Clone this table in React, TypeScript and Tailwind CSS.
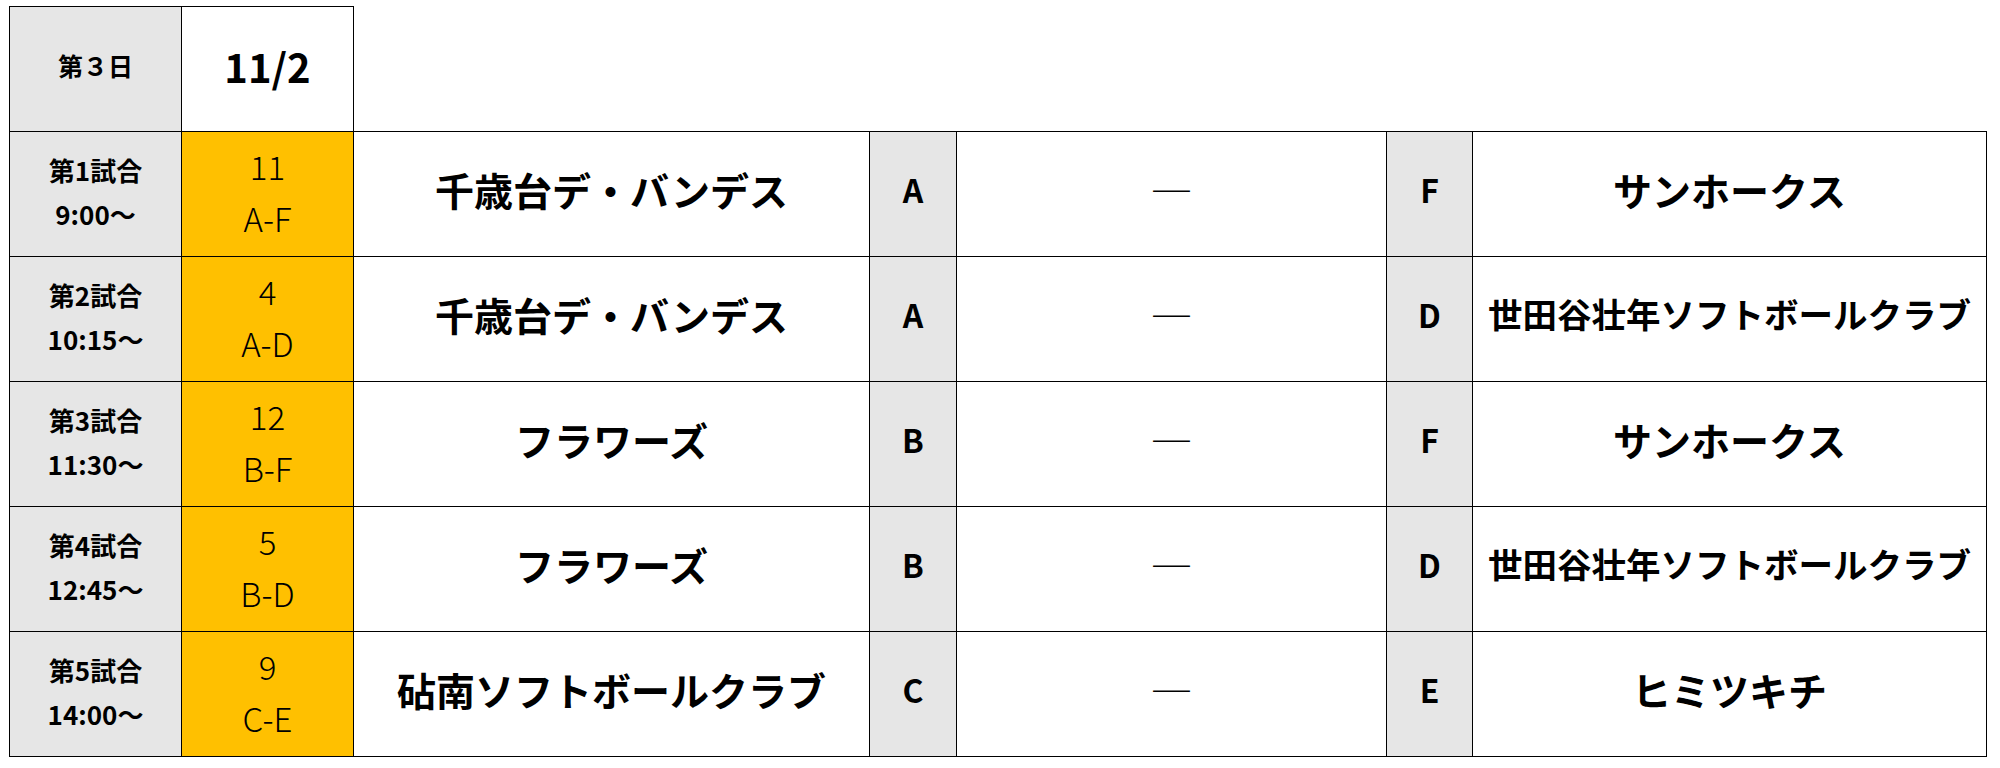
const font = { fontFamily: '"Noto Sans CJK JP", "Noto Sans", sans-serif' };

type Match = {
  no: string;
  time: string;
  num: string;
  pair: string;
  home: string;
  homeCode: string;
  away: string;
  awayCode: string;
  awaySmall?: boolean;
};

const matches: Match[] = [
  { no: "第1試合", time: "9:00～", num: "11", pair: "A-F", home: "千歳台デ・バンデス", homeCode: "A", away: "サンホークス", awayCode: "F" },
  { no: "第2試合", time: "10:15～", num: "4", pair: "A-D", home: "千歳台デ・バンデス", homeCode: "A", away: "世田谷壮年ソフトボールクラブ", awayCode: "D", awaySmall: true },
  { no: "第3試合", time: "11:30～", num: "12", pair: "B-F", home: "フラワーズ", homeCode: "B", away: "サンホークス", awayCode: "F" },
  { no: "第4試合", time: "12:45～", num: "5", pair: "B-D", home: "フラワーズ", homeCode: "B", away: "世田谷壮年ソフトボールクラブ", awayCode: "D", awaySmall: true },
  { no: "第5試合", time: "14:00～", num: "9", pair: "C-E", home: "砧南ソフトボールクラブ", homeCode: "C", away: "ヒミツキチ", awayCode: "E" },
];

const cell = "flex flex-col items-center justify-center border-r border-b border-black text-black";

export default function App() {
  return (
    <div className="min-h-screen bg-white pl-[9px] pt-[6px]" style={font}>
      {/* header row: day + date */}
      <div className="flex">
        <div className="flex h-[125px] w-[173px] items-center justify-center border-l border-t border-r border-black bg-[#e6e6e6] pb-[7px] text-[25px] font-bold text-black">
          第３日
        </div>
        <div className="flex h-[125px] w-[172px] items-center justify-center border-t border-r border-black bg-white pb-[7px] text-[40px] font-bold text-black">
          11/2
        </div>
      </div>

      <div className="grid w-[1978px] grid-cols-[172px_172px_516px_87px_430px_86px_514px] auto-rows-[125px] border-l border-t border-black">
        {matches.map((m) => (
          <div key={m.no} className="contents">
            <div className={`${cell} bg-[#e6e6e6] pb-[5px] text-[26px] font-bold leading-[44px]`}>
              <span>{m.no}</span>
              <span>{m.time}</span>
            </div>
            <div className={`${cell} bg-[#ffc000] pb-[4px] text-[33px] font-light leading-[52px]`}>
              <span>{m.num}</span>
              <span>{m.pair}</span>
            </div>
            <div className={`${cell} bg-white pb-[10px] text-[39px] font-bold`}>{m.home}</div>
            <div className={`${cell} bg-[#e6e6e6] pb-[10px] text-[32px] font-bold`}>{m.homeCode}</div>
            <div className={`${cell} bg-white pb-[10px] text-[43px] font-light`}>―</div>
            <div className={`${cell} bg-[#e6e6e6] pb-[10px] text-[32px] font-bold`}>{m.awayCode}</div>
            <div className={`${cell} bg-white pb-[10px] font-bold whitespace-nowrap ${m.awaySmall ? "text-[34.5px]" : "text-[39px]"}`}>
              {m.away}
            </div>
          </div>
        ))}
      </div>
    </div>
  );
}
